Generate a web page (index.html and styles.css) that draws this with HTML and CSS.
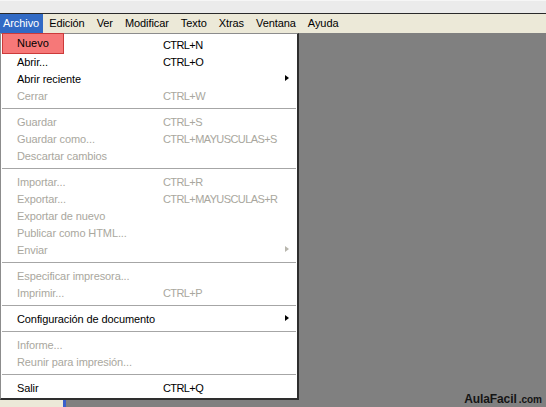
FILE: index.html
```html
<!DOCTYPE html>
<html lang="es">
<head>
<meta charset="utf-8">
<title>Archivo</title>
<link rel="stylesheet" href="styles.css">
</head>
<body>
<div class="screen">
  <div class="topstrip"></div>
  <div class="menubar">
    <span class="mb-item active">Archivo</span>
    <span class="mb-item">Edición</span>
    <span class="mb-item">Ver</span>
    <span class="mb-item">Modificar</span>
    <span class="mb-item">Texto</span>
    <span class="mb-item">Xtras</span>
    <span class="mb-item">Ventana</span>
    <span class="mb-item">Ayuda</span>
  </div>
  <div class="workspace">
    <div class="sidepanel"></div>
    <div class="stage"></div>

    <div class="menu">
      <div class="row"><span class="label">Nuevo</span><span class="key">CTRL+N</span></div>
      <div class="row"><span class="label">Abrir...</span><span class="key">CTRL+O</span></div>
      <div class="row"><span class="label">Abrir reciente</span><span class="key"></span><span class="arrow"></span></div>
      <div class="row off"><span class="label">Cerrar</span><span class="key">CTRL+W</span></div>
      <div class="sep"></div>
      <div class="row off"><span class="label">Guardar</span><span class="key">CTRL+S</span></div>
      <div class="row off"><span class="label">Guardar como...</span><span class="key">CTRL+MAYUSCULAS+S</span></div>
      <div class="row off"><span class="label">Descartar cambios</span><span class="key"></span></div>
      <div class="sep"></div>
      <div class="row off"><span class="label">Importar...</span><span class="key">CTRL+R</span></div>
      <div class="row off"><span class="label">Exportar...</span><span class="key">CTRL+MAYUSCULAS+R</span></div>
      <div class="row off"><span class="label">Exportar de nuevo</span><span class="key"></span></div>
      <div class="row off"><span class="label">Publicar como HTML...</span><span class="key"></span></div>
      <div class="row off"><span class="label">Enviar</span><span class="key"></span><span class="arrow"></span></div>
      <div class="sep"></div>
      <div class="row off"><span class="label">Especificar impresora...</span><span class="key"></span></div>
      <div class="row off"><span class="label">Imprimir...</span><span class="key">CTRL+P</span></div>
      <div class="sep"></div>
      <div class="row"><span class="label">Configuración de documento</span><span class="key"></span><span class="arrow"></span></div>
      <div class="sep"></div>
      <div class="row off"><span class="label">Informe...</span><span class="key"></span></div>
      <div class="row off"><span class="label">Reunir para impresión...</span><span class="key"></span></div>
      <div class="sep"></div>
      <div class="row"><span class="label">Salir</span><span class="key">CTRL+Q</span></div>
    </div>

    <div class="mark">Nuevo</div>
    <div class="logo"><span class="logo-name">AulaFacil</span><span class="logo-com">.com</span></div>
  </div>
</div>
</body>
</html>
```
FILE: styles.css
```css
* { box-sizing: border-box; }
html, body { margin: 0; padding: 0; }
body {
  width: 546px;
  height: 407px;
  overflow: hidden;
  font-family: "Liberation Sans", Arial, sans-serif;
  font-size: 11px;
  color: #000;
  background: #808080;
}
.screen {
  width: 546px;
  height: 407px;
  display: flex;
  flex-direction: column;
}
.topstrip {
  height: 14px;
  background: #ebebeb;
  border-top: 1px solid #f6f6f6;
  border-bottom: 1px solid #2a2a2a;
}
.menubar {
  height: 19px;
  background: #ece9d8;
  display: flex;
  align-items: stretch;
  letter-spacing: -0.08px;
}
.mb-item {
  display: flex;
  align-items: center;
  padding: 0 6px;
  line-height: 19px;
}
.mb-item:first-child { padding-left: 3px; padding-right: 4px; }
.mb-item.active {
  background: #316ac5;
  color: #fff;
}
.workspace {
  flex: 1;
  position: relative;
  display: flex;
}
.sidepanel {
  width: 66px;
  background: #ece9d8;
  border-right: 3px solid #3a5fcd;
}
.stage {
  flex: 1;
  background: #808080;
}
.menu {
  position: absolute;
  left: 0;
  top: 0;
  width: 299px;
  background: #fff;
  border: 1px solid #8c8c8c;
  border-right: 2px solid #2e2e2e;
  border-bottom: 2px solid #2e2e2e;
  padding: 2px 0 2px 0;
}
.row {
  height: 17px;
  display: flex;
  align-items: center;
  padding-left: 16px;
  position: relative;
}
.label { width: 146px; letter-spacing: -0.1px; }
.key { flex: 1; letter-spacing: -0.6px; }
.row.off { color: #a9a79e; }
.arrow {
  position: absolute;
  right: 8px;
  top: 5px;
  width: 0;
  height: 0;
  border-top: 3.5px solid transparent;
  border-bottom: 3.5px solid transparent;
  border-left: 4px solid #000;
}
.row.off .arrow { border-left-color: #b8b6ad; }
.sep {
  height: 9px;
  display: flex;
  align-items: center;
  padding: 0 1px;
}
.sep::before {
  content: "";
  display: block;
  width: 100%;
  height: 1px;
  background: #a6a6a6;
}
.mark {
  position: absolute;
  left: 2px;
  top: 0;
  width: 62px;
  height: 21px;
  background: #f67878;
  border: 1px solid #cc3a3a;
  padding-left: 14px;
  line-height: 19px;
  color: #000;
}
.logo {
  position: absolute;
  right: 4px;
  bottom: 1px;
  color: #151515;
  font-family: "Liberation Sans", Arial, sans-serif;
  display: flex;
  align-items: baseline;
  line-height: 12px;
}
.logo-name { font-size: 12px; font-weight: bold; letter-spacing: -0.1px; }
.logo-com { font-size: 10px; font-weight: bold; margin-left: 2px; }
```
